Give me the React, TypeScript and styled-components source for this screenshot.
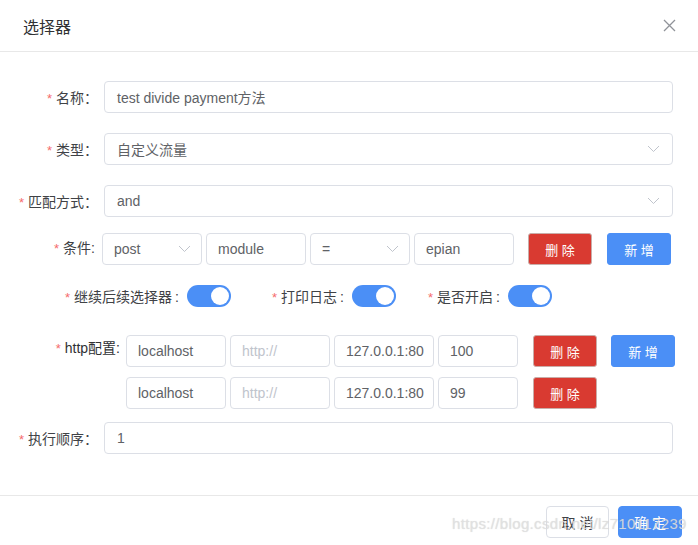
import styled, { createGlobalStyle } from "styled-components";

const GlobalStyle = createGlobalStyle`
  html, body {
    margin: 0;
    padding: 0;
    background: #fff;
    font-family: "Liberation Sans", "Noto Sans CJK SC", sans-serif;
  }
`;

const Chevron = () => (
  <svg width="13" height="8" viewBox="0 0 13 8" fill="none">
    <path d="M1 1l5.5 5.5L12 1" stroke="#c0c4cc" strokeWidth="1" />
  </svg>
);

const CloseIcon = () => (
  <svg width="13" height="13" viewBox="0 0 13 13">
    <path d="M1 1l11 11M12 1L1 12" stroke="#909399" strokeWidth="1.3" />
  </svg>
);

const Field: React.FC<{ label: string; colon?: string; raised?: boolean }> = ({
  label,
  colon = "：",
  raised,
}) => (
  <Label raised={raised}>
    <Star>*</Star>
    {label}
    {colon}
  </Label>
);

const App: React.FC = () => {
  const switches = [
    { label: "继续后续选择器", gap: 41 },
    { label: "打印日志", gap: 32 },
    { label: "是否开启", gap: 0 },
  ];
  const hosts = ["100", "99"];

  return (
    <Dialog>
      <GlobalStyle />
      <Header>
        <Title>选择器</Title>
        <Close>
          <CloseIcon />
        </Close>
      </Header>

      <Body>
        <Row>
          <Field label="名称" />
          <Input>test divide payment方法</Input>
        </Row>
        <Row top={20}>
          <Field label="类型" />
          <Input>
            自定义流量
            <Chevron />
          </Input>
        </Row>
        <Row top={20}>
          <Field label="匹配方式" />
          <Input>
            and
            <Chevron />
          </Input>
        </Row>

        <Row top={16}>
          <Field label="条件" colon=":" raised />
          <Group offset={-2}>
            <Box w={100}>
              post
              <Chevron />
            </Box>
            <Box w={100}>module</Box>
            <Box w={100}>
              =
              <Chevron />
            </Box>
            <Box w={100}>epian</Box>
            <Btn kind="danger" gapLeft={10}>删 除</Btn>
            <Btn kind="primary" gapLeft={11}>新 增</Btn>
          </Group>
        </Row>

        <SwitchRow>
          {switches.map((s) => (
            <SwitchItem key={s.label} gap={s.gap}>
              <SwitchLabel>
                <Star>*</Star>
                {s.label}
                <Colon>:</Colon>
              </SwitchLabel>
              <Switch>
                <Knob />
              </Switch>
            </SwitchItem>
          ))}
        </SwitchRow>

        <HttpBlock>
          <HttpLabel>
            <Star>*</Star>http配置:
          </HttpLabel>
          <HttpRows>
            {hosts.map((h, i) => (
              <Group key={h}>
                <Box w={100}>localhost</Box>
                <Box w={100} muted>
                  http://
                </Box>
                <Box w={100}>127.0.0.1:80</Box>
                <Box w={80}>{h}</Box>
                <Btn kind="danger" gapLeft={11}>删 除</Btn>
                {i === 0 && <Btn kind="primary" gapLeft={10}>新 增</Btn>}
              </Group>
            ))}
          </HttpRows>
        </HttpBlock>

        <Row top={13}>
          <Field label="执行顺序" />
          <Input>1</Input>
        </Row>
      </Body>

      <Footer>
        <PlainBtn>取 消</PlainBtn>
        <OkBtn>确 定</OkBtn>
        <Watermark>https://blog.csdn.net/lz710117239</Watermark>
      </Footer>
    </Dialog>
  );
};

export default App;

const Dialog = styled.div`
  width: 698px;
  height: 545px;
  display: flex;
  flex-direction: column;
  background: #fff;
  overflow: hidden;
`;

const Header = styled.div`
  height: 52px;
  box-sizing: border-box;
  border-bottom: 1px solid #e8e8e8;
  display: flex;
  align-items: center;
  justify-content: space-between;
  padding: 0 22px 0 23px;
`;

const Title = styled.div`
  font-size: 16px;
  color: #303133;
`;

const Close = styled.div`
  display: flex;
  width: 14px;
  height: 14px;
  align-items: center;
  justify-content: center;
`;

const Body = styled.div`
  flex: 1;
  padding: 29px 25px 0 0;
  display: flex;
  flex-direction: column;
`;

const Row = styled.div<{ top?: number }>`
  display: flex;
  align-items: center;
  margin-top: ${(p) => p.top ?? 0}px;
`;

const Label = styled.div<{ raised?: boolean }>`
  width: 104px;
  flex: none;
  box-sizing: border-box;
  padding-right: ${(p) => (p.raised ? 9 : 6)}px;
  padding-bottom: ${(p) => (p.raised ? 5 : 0)}px;
  text-align: right;
  font-size: 14px;
  color: #404246;
  white-space: nowrap;
`;

const Star = styled.span`
  color: #f56c6c;
  margin-right: 4px;
  font-size: 13px;
`;

const Colon = styled.span`
  margin-left: 3px;
`;

const Input = styled.div`
  flex: 1;
  height: 32px;
  box-sizing: border-box;
  border: 1px solid #dcdfe6;
  border-radius: 4px;
  padding: 0 12px 0 12px;
  display: flex;
  align-items: center;
  justify-content: space-between;
  font-size: 14px;
  color: #606266;
`;

const Group = styled.div<{ offset?: number }>`
  display: flex;
  align-items: center;
  gap: 4px;
  margin-left: ${(p) => p.offset ?? 0}px;
`;

const Box = styled.div<{ w: number; muted?: boolean }>`
  width: ${(p) => p.w}px;
  height: 32px;
  box-sizing: border-box;
  border: 1px solid #dcdfe6;
  border-radius: 4px;
  padding: 0 10px 0 11px;
  display: flex;
  align-items: center;
  justify-content: space-between;
  font-size: 14px;
  color: ${(p) => (p.muted ? "#c0c4cc" : "#606266")};
  white-space: nowrap;
`;

const Btn = styled.div<{ kind: "danger" | "primary"; gapLeft: number }>`
  width: 64px;
  height: 32px;
  box-sizing: border-box;
  margin-left: ${(p) => p.gapLeft}px;
  border-radius: 3px;
  display: flex;
  align-items: center;
  justify-content: center;
  font-size: 13px;
  color: #fff;
  background: ${(p) => (p.kind === "danger" ? "#d93a31" : "#4b8ff6")};
  border: 1px solid ${(p) => (p.kind === "danger" ? "#c9ada9" : "#4b8ff6")};
`;

const SwitchRow = styled.div`
  display: flex;
  align-items: center;
  margin-top: 20px;
  padding-left: 65px;
  height: 22px;
`;

const SwitchItem = styled.div<{ gap: number }>`
  display: flex;
  align-items: center;
  gap: 8px;
  margin-right: ${(p) => p.gap}px;
`;

const SwitchLabel = styled.div`
  font-size: 14px;
  color: #404246;
  white-space: nowrap;
`;

const Switch = styled.div`
  width: 44px;
  height: 22px;
  border-radius: 11px;
  background: #4b8ff6;
  position: relative;
`;

const Knob = styled.div`
  position: absolute;
  right: 2px;
  top: 2px;
  width: 18px;
  height: 18px;
  border-radius: 50%;
  background: #fff;
`;

const HttpBlock = styled.div`
  display: flex;
  margin-top: 28px;
`;

const HttpLabel = styled.div`
  width: 122px;
  flex: none;
  box-sizing: border-box;
  padding-right: 2px;
  text-align: right;
  font-size: 14px;
  color: #303133;
  padding-top: 2px;
  white-space: nowrap;
`;

const HttpRows = styled.div`
  display: flex;
  flex-direction: column;
  gap: 10px;
  margin-left: 4px;
`;

const Footer = styled.div`
  height: 50px;
  box-sizing: border-box;
  border-top: 1px solid #e8e8e8;
  display: flex;
  justify-content: flex-end;
  align-items: flex-start;
  gap: 9px;
  padding: 10px 16px 0 0;
  position: relative;
`;

const PlainBtn = styled.div`
  width: 63px;
  height: 32px;
  box-sizing: border-box;
  border: 1px solid #dcdfe6;
  border-radius: 4px;
  display: flex;
  align-items: center;
  justify-content: center;
  font-size: 14px;
  color: #404246;
`;

const OkBtn = styled(PlainBtn)`
  width: 64px;
  border-color: #4b8ff6;
  background: #4b8ff6;
  color: #fff;
`;

const Watermark = styled.div`
  position: absolute;
  left: 452px;
  top: 19px;
  font-size: 15px;
  letter-spacing: 0.35px;
  color: rgba(225, 225, 225, 0.85);
  text-shadow: 0 0 1px rgba(150, 150, 150, 0.35);
  white-space: nowrap;
  pointer-events: none;
`;
